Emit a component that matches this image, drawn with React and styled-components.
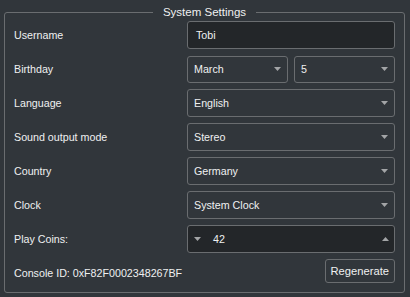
import React from 'react'
import styled, { createGlobalStyle } from 'styled-components'

const GlobalStyle = createGlobalStyle`
  html, body {
    margin: 0;
    background: #31363b;
  }
  body {
    font-family: "Liberation Sans", Arial, sans-serif;
    font-size: 10.7px;
    color: #eff0f1;
  }
`

const Group = styled.fieldset`
  box-sizing: border-box;
  width: 400px;
  height: 288px;
  margin: 5px 0 0 4px;
  padding: 2px 9px 9px 9px;
  border: 1px solid #6a6d70;
  border-radius: 3px;
`

const Title = styled.legend`
  margin: 0 auto;
  padding: 0 10px;
  font-size: 11.5px;
  line-height: 14px;
  color: #eff0f1;
`

const Form = styled.div`
  display: grid;
  grid-template-columns: 173px 208px;
  grid-auto-rows: 28px;
  row-gap: 6px;
  align-items: center;
`

const Label = styled.span`
  line-height: 28px;
  white-space: nowrap;
`

const TextBox = styled.div`
  box-sizing: border-box;
  height: 28px;
  display: flex;
  align-items: center;
  padding: 0 8px;
  background: #232629;
  border: 1px solid #6a6d70;
  border-radius: 3px;
`

const Pair = styled.div`
  display: grid;
  grid-template-columns: 1fr 1fr;
  column-gap: 6px;
`

const Combo = styled.div`
  box-sizing: border-box;
  height: ${p => p.short ? 27 : 28}px;
  display: flex;
  align-items: center;
  justify-content: space-between;
  padding: 0 6px 0 6px;
  border: 1px solid #6a6d70;
  border-radius: 3px;
  background: #31363b;
`

const Spin = styled(TextBox)`
  padding: 0 5px 0 6px;
  gap: 12px;
`

const SpinValue = styled.span`
  flex: 1;
`

const Footer = styled.div`
  display: flex;
  justify-content: flex-end;
  align-self: start;
`

const Button = styled.button`
  box-sizing: border-box;
  height: 24px;
  padding: 0 5px;
  font: inherit;
  font-size: 11.2px;
  color: #eff0f1;
  background: #31363b;
  border: 1px solid #6a6d70;
  border-radius: 3px;
`

function Arrow({ up }) {
  return (
    <svg width="7" height="4" viewBox="0 0 7 4">
      <polygon points={up ? '0,4 7,4 3.5,0' : '0,0 7,0 3.5,4'} fill="#a3a5a7" />
    </svg>
  )
}

function Select({ value, short }) {
  return (
    <Combo short={short}>
      <span>{value}</span>
      <Arrow />
    </Combo>
  )
}

export default function App() {
  return (
    <>
      <GlobalStyle />
      <Group>
        <Title>System Settings</Title>
        <Form>
          <Label>Username</Label>
          <TextBox>Tobi</TextBox>

          <Label>Birthday</Label>
          <Pair>
            <Select value="March" short />
            <Select value="5" short />
          </Pair>

          <Label>Language</Label>
          <Select value="English" />

          <Label>Sound output mode</Label>
          <Select value="Stereo" />

          <Label>Country</Label>
          <Select value="Germany" />

          <Label>Clock</Label>
          <Select value="System Clock" />

          <Label>Play Coins:</Label>
          <Spin>
            <Arrow />
            <SpinValue>42</SpinValue>
            <Arrow up />
          </Spin>

          <Label>Console ID: 0xF82F0002348267BF</Label>
          <Footer>
            <Button>Regenerate</Button>
          </Footer>
        </Form>
      </Group>
    </>
  )
}
